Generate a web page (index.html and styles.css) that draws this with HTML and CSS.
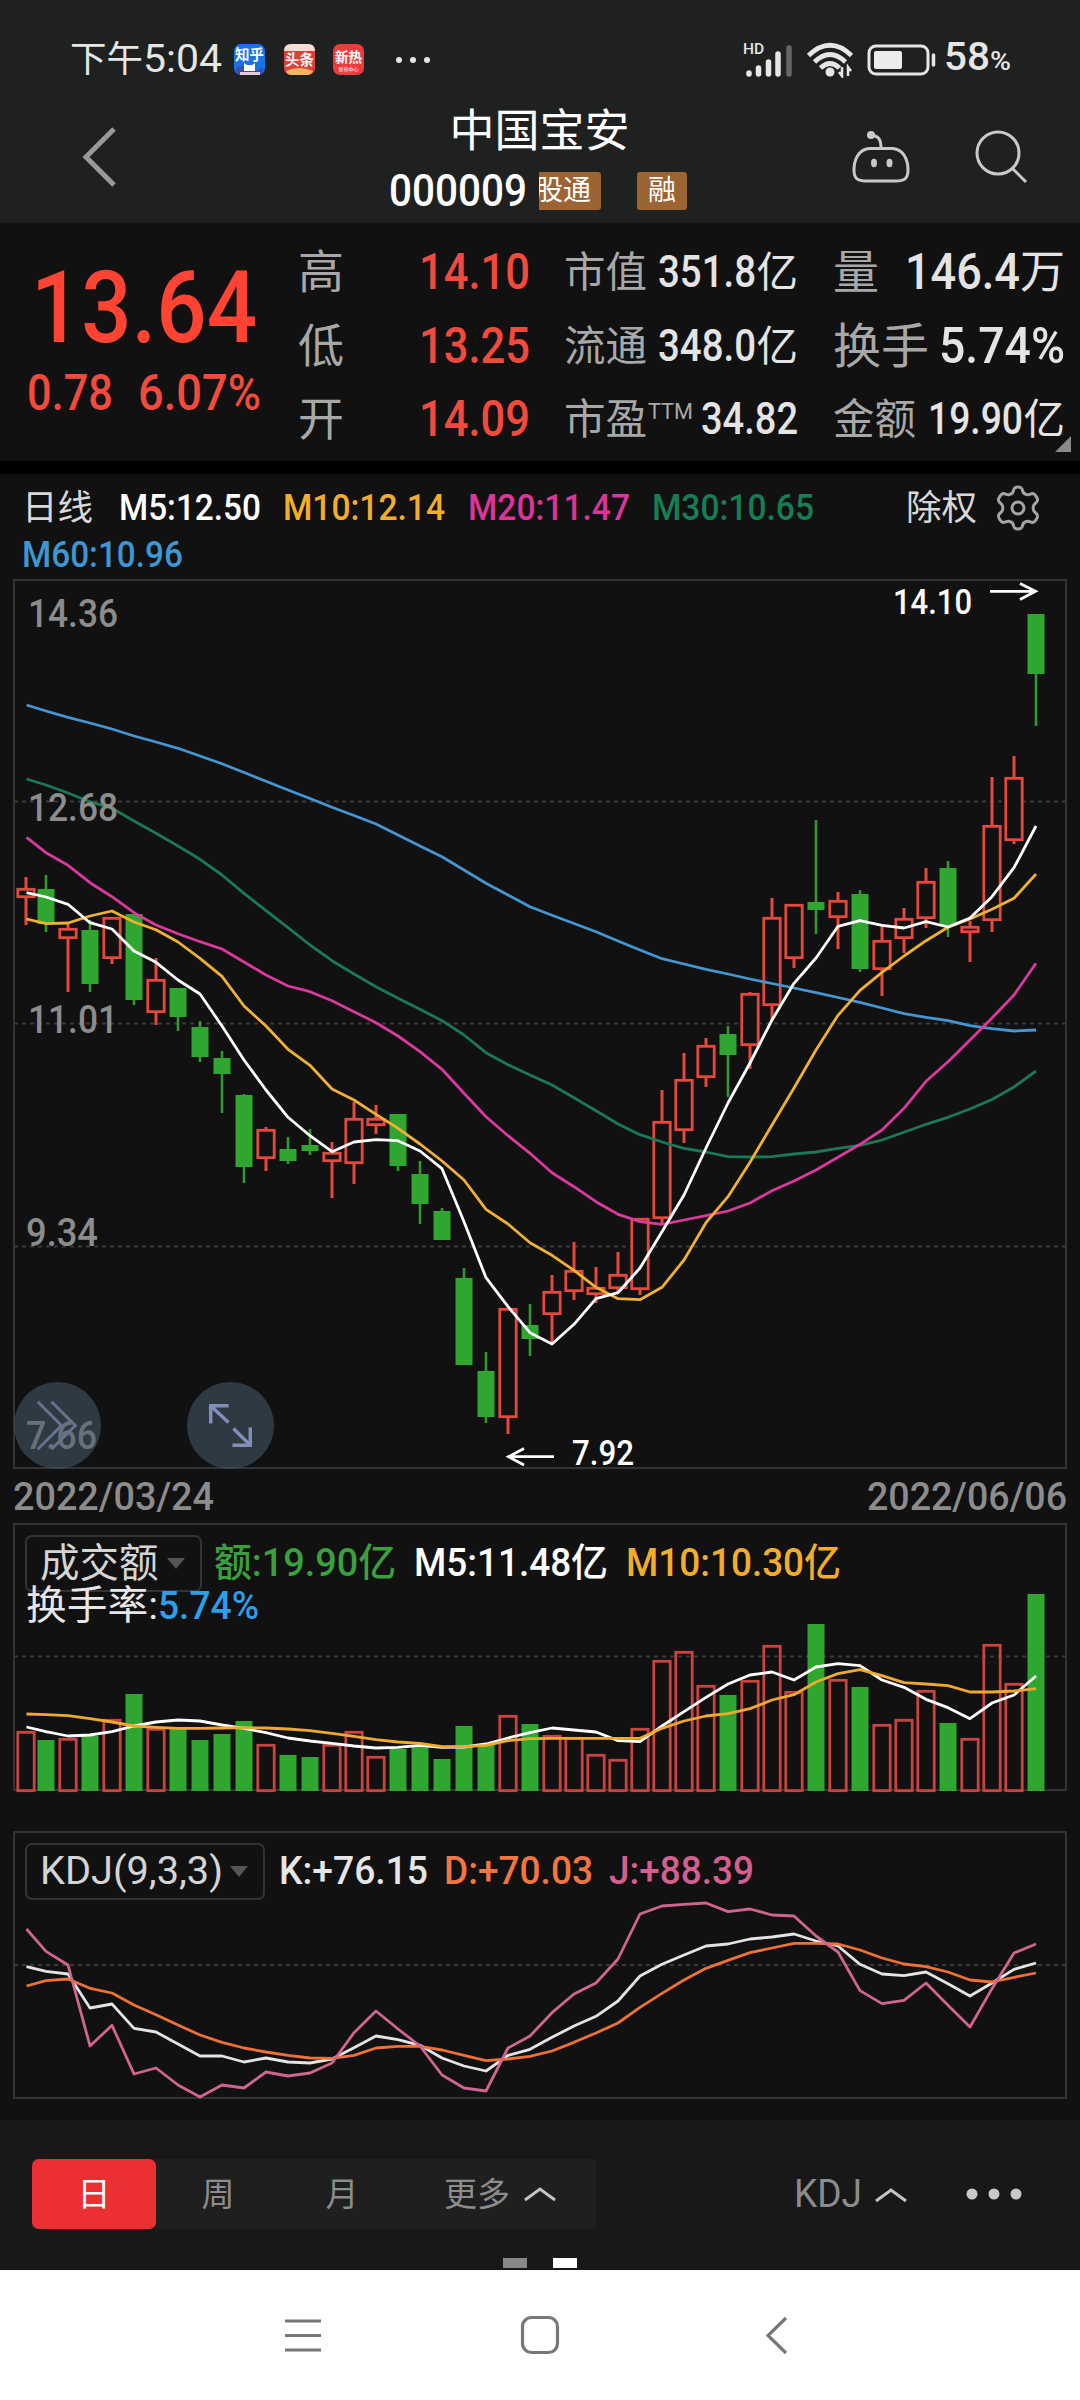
FILE: index.html
```html
<!DOCTYPE html>
<html lang="zh-CN">
<head>
<meta charset="utf-8">
<title>中国宝安 000009</title>
<link rel="stylesheet" href="styles.css">
</head>
<body>
<header class="top">
  <div class="status">
    <div class="clock"><span class="cjk">下午</span><span class="fit" data-w="79">5:04</span></div>
    <div class="apps">
      <svg class="app" viewBox="0 0 31 31"><rect width="31" height="31" rx="7" fill="#1772e6"/><path d="M2 24q6-4 13 0t14 0v3q-2 4-7 4H8q-5 0-6-4z" fill="#3c4fa8"/><path d="M10 27v-8l3 2h5l3-2v8z" fill="#fff"/><path d="M6 28h20v3H6z" fill="#e8c9dc"/><text x="15.500" y="16" class="app-text">知乎</text></svg>
      <svg class="app" viewBox="0 0 31 31"><rect width="31" height="31" rx="7" fill="#e33d36"/><path d="M0 7q0-7 7-7h17q7 0 7 7z" fill="#f6dcd4"/><path d="M2 27q13-6 27 0-2 4-6 4H8q-5 0-6-4z" fill="#f3b562"/><text x="15.500" y="21" class="app-text">头条</text></svg>
      <svg class="app" viewBox="0 0 31 31"><rect width="31" height="31" rx="7" fill="#ee3b3e"/><text x="15.500" y="18" class="app-text small">新热</text><text x="15.500" y="27" class="app-text tiny">新热中心</text></svg>
    </div>
    <svg class="more-dots" viewBox="0 0 36 10"><circle cx="4" cy="5" r="3"/><circle cx="18" cy="5" r="3"/><circle cx="32" cy="5" r="3"/></svg>
    <div class="sys">
      <svg class="signal" viewBox="0 0 50 36"><text x="-2" y="12" class="hd">HD</text><g stroke-width="5.500" stroke-linecap="round"><path d="M4 31v1M13.500 26v6M23.500 20v12M33 12v20"/><path class="dim" d="M44 6v26"/></g></svg>
      <svg class="wifi" viewBox="0 0 48 36"><g fill="none" stroke="#e6e6e6" stroke-width="4.800"><path d="M2.500 13.500Q24-7 45.500 13.500"/><path d="M8.500 20Q24 5 39.500 20"/><path d="M14.500 26Q24 17 33.500 26"/></g><circle cx="24" cy="30" r="4.500" fill="#e6e6e6"/><path d="M36 25v9l-3-4M42 34v-9l3 4" fill="none" stroke="#e6e6e6" stroke-width="2.500"/></svg>
      <svg class="battery" viewBox="0 0 70 32"><rect x="2" y="2" width="59" height="28" rx="7" fill="none" stroke="#e6e6e6" stroke-width="3"/><rect x="7" y="7" width="28" height="18" rx="2" fill="#ececec"/><path d="M66.500 11v10" stroke="#e6e6e6" stroke-width="3.500" stroke-linecap="round"/></svg>
      <div class="pct"><span class="fit" data-w="46">58</span><span class="fit sign" data-w="21">%</span></div>
    </div>
  </div>
  <div class="title-bar">
    <svg class="back" viewBox="0 0 40 64"><path d="M34 4 6 32l28 28" fill="none" stroke="#999" stroke-width="5"/></svg>
    <div class="title">
      <h1>中国宝安</h1>
      <div class="code-row"><span class="fit code" data-w="138">000009</span><span class="tag cut"><span>股通</span></span><span class="tag">融</span></div>
    </div>
    <div class="tools">
      <svg class="robot" viewBox="0 0 58 54"><g fill="none" stroke="#c9c9c9" stroke-width="3"><path d="M29 18C29 10 27 6 19 5"/><path d="M17 18.500h24C51 19.500 56 29 56 40c0 9-4 11-12 11H14C6 51 2 49 2 40c0-11 5-20.500 15-21.500z"/></g><circle cx="19" cy="5" r="4" fill="#c9c9c9"/><ellipse cx="22" cy="33" rx="3" ry="4.200" fill="#c9c9c9"/><ellipse cx="37.500" cy="33" rx="3" ry="4.200" fill="#c9c9c9"/></svg>
      <svg class="search" viewBox="0 0 56 56"><circle cx="24" cy="24" r="21" fill="none" stroke="#c9c9c9" stroke-width="3"/><path d="m38 39 14 14" stroke="#c9c9c9" stroke-width="3"/></svg>
    </div>
  </div>
</header>

<section class="quote">
  <div class="price">
    <div class="last"><span class="fit" data-w="226">13.64</span></div>
    <div class="change"><span class="fit" data-w="86">0.78</span><span class="fit" data-w="123">6.07%</span></div>
  </div>
  <div class="col ohl">
    <div class="row"><span class="lab">高</span><span class="fit red" data-w="111">14.10</span></div>
    <div class="row"><span class="lab">低</span><span class="fit red" data-w="111">13.25</span></div>
    <div class="row"><span class="lab">开</span><span class="fit red" data-w="111">14.09</span></div>
  </div>
  <div class="col cap">
    <div class="row"><span class="lab">市值</span><span class="val"><span class="fit" data-w="98">351.8</span><span class="unit">亿</span></span></div>
    <div class="row"><span class="lab">流通</span><span class="val"><span class="fit" data-w="98">348.0</span><span class="unit">亿</span></span></div>
    <div class="row"><span class="lab">市盈<span class="ttm fit" data-w="45">TTM</span></span><span class="fit val" data-w="97">34.82</span></div>
  </div>
  <div class="col vol">
    <div class="row"><span class="lab l1">量</span><span class="val big"><span class="fit" data-w="115">146.4</span><span class="unit">万</span></span></div>
    <div class="row"><span class="lab l2">换手</span><span class="fit val big" data-w="126">5.74%</span></div>
    <div class="row"><span class="lab">金额</span><span class="val"><span class="fit" data-w="95">19.90</span><span class="unit">亿</span></span></div>
  </div>
  <i class="corner"></i>
</section>

<section class="legend">
  <div class="ma-list">
    <span class="cjk">日线</span><span class="fit m5" data-w="142">M5:12.50</span><span class="fit m10" data-w="162">M10:12.14</span><span class="fit m20" data-w="162">M20:11.47</span><span class="fit m30" data-w="162">M30:10.65</span><span class="fit m60" data-w="161">M60:10.96</span>
  </div>
  <div class="adjust"><span class="cjk">除权</span>
    <svg class="gear" viewBox="0 0 44 46"><path d="M22 2c3.500 0 4 1 4.500 3.500.5 2.500 2 3.800 4.500 4.200 2 .3 3.500-.9 5.500-1.200 2.200-.2 5.500 5 5 7-.4 1.800-3 3-3.800 4.800-.7 1.800-.7 3.600 0 5.400.8 1.800 3.400 3 3.800 4.800.5 2-2.800 7.200-5 7-2-.3-3.500-1.500-5.500-1.200-2.500.4-4 1.700-4.500 4.200C26 43 25.500 44 22 44s-4-1-4.500-3.500c-.5-2.500-2-3.800-4.500-4.200-2-.3-3.500.9-5.500 1.200-2.200.2-5.500-5-5-7 .4-1.800 3-3 3.800-4.800.7-1.800.7-3.600 0-5.400-.8-1.800-3.400-3-3.800-4.800-.5-2 2.800-7.200 5-7 2 .3 3.500 1.500 5.500 1.200 2.500-.4 4-1.700 4.500-4.200C18 3 18.500 2 22 2z"/><circle cx="22" cy="23" r="6"/></svg>
  </div>
</section>

<section class="panel kline">
  <svg id="kline" class="plot" viewBox="0 574 1080 948"></svg>
  <div class="float f1"><svg viewBox="0 0 88 88"><path d="M24 20 48 44 24 68M38 20 62 44 38 68" fill="none" stroke="#65748a" stroke-width="3"/></svg></div>
  <div class="float f2"><svg viewBox="0 0 88 88"><g fill="none" stroke="#7f8fb8" stroke-width="3.500"><path d="M24 42V24h18M25 25l17 16M64 46v18H46M63 63 47 47"/></g></svg></div>
</section>

<section class="panel turnover">
  <svg id="turnover" class="plot" viewBox="0 1522 1080 300"></svg>
  <div class="head">
    <span class="select"><span class="cjk">成交额</span><i class="caret"></i></span>
    <span class="fit amount" data-w="182">额:19.90亿</span><span class="fit m5" data-w="194">M5:11.48亿</span><span class="fit m10" data-w="215">M10:10.30亿</span>
  </div>
  <div class="rate"><span class="fit" data-w="132">换手率:</span><span class="fit blue" data-w="101">5.74%</span></div>
</section>

<section class="panel kdj">
  <svg id="kdj" class="plot" viewBox="0 1822 1080 298"></svg>
  <div class="head">
    <span class="select"><span class="fit" data-w="183">KDJ(9,3,3)</span><i class="caret"></i></span>
    <span class="fit k" data-w="149">K:+76.15</span><span class="fit d" data-w="149">D:+70.03</span><span class="fit j" data-w="145">J:+88.39</span>
  </div>
</section>

<footer class="toolbar">
  <div class="periods">
    <span class="tab on">日</span><span class="tab">周</span><span class="tab">月</span>
    <span class="tab more">更多<svg class="chev" viewBox="0 0 34 16"><path d="M2 14 17 3l15 11"/></svg></span>
  </div>
  <div class="indicator"><span class="fit" data-w="68">KDJ</span><svg class="chev" viewBox="0 0 34 16"><path d="M2 14 17 3l15 11"/></svg></div>
  <svg class="dots" viewBox="0 0 58 14"><circle cx="7" cy="7" r="5.500"/><circle cx="29" cy="7" r="5.500"/><circle cx="51" cy="7" r="5.500"/></svg>
  <div class="pager"><i></i><i class="on"></i></div>
</footer>

<nav class="sysnav">
  <svg viewBox="0 0 40 40"><path d="M2 6h36M2 20.500h36M2 35h36"/></svg>
  <svg viewBox="0 0 40 40"><rect x="2.500" y="2.500" width="35" height="35" rx="9"/></svg>
  <svg viewBox="0 0 40 40"><path d="M29 3 11 20.500 29 38"/></svg>
</nav>
<script src="chart.js"></script>
</body>
</html>
```
FILE: styles.css
```css
* { box-sizing: border-box; }
body {
  margin: 0;
  width: 1080px;
  height: 2400px;
  overflow: hidden;
  background: #111;
  color: #e6e6e6;
  font-family: Roboto, "Noto Sans CJK SC", sans-serif;
}
svg { display: block; flex: none; }
.fit { display: inline-block; white-space: nowrap; transform-origin: 0 50%; flex: none; }
.cjk { white-space: nowrap; flex: none; }

/* status bar and title */
.top { height: 223px; background: #1f2121; }
.status { height: 90px; padding: 29px 69px 0 70px; display: flex; align-items: center; font-size: 39px; line-height: 61px; }
.clock { display: flex; width: 164px; }
.clock .cjk { font-size: 36.5px; }
.apps { display: flex; gap: 18.5px; }
.app { width: 31px; height: 31px; }
.app-text { font-size: 14.5px; font-weight: 700; fill: #fff; text-anchor: middle; }
.app-text.small { font-size: 13.5px; }
.app-text.tiny { font-size: 5px; font-weight: 400; }
.more-dots { width: 36px; height: 10px; margin-left: 31px; fill: #e6e6e6; }
.sys { margin-left: auto; display: flex; align-items: center; }
.signal { width: 50px; height: 36px; stroke: #e6e6e6; margin-right: 11px; overflow: visible; }
.signal .dim { stroke: #666; }
.hd { font-size: 15.5px; font-weight: 500; fill: #e6e6e6; stroke: none; }
.wifi { width: 48px; height: 36px; margin-right: 13px; }
.battery { width: 70px; height: 32px; margin-right: 7px; }
.pct { display: flex; align-items: baseline; font-weight: 500; }
.pct .sign { font-size: 25px; }

.title-bar { height: 132px; display: grid; grid-template-columns: 389px 301px 390px; align-items: center; }
.back { width: 40px; height: 64px; margin: 2px 0 0 80px; }
.title { align-self: start; padding-top: 12px; color: #fff; }
.title h1 { margin: 0; font-size: 45px; font-weight: 400; line-height: 60px; text-align: center; }
.code-row { display: flex; align-items: center; height: 58px; }
.code { font-size: 45px; line-height: 58px; font-weight: 500; }
.tag { height: 38px; width: 50px; border-radius: 3px; background: #9c6333; font-size: 28px; line-height: 37px; text-align: center; margin-left: 36px; white-space: nowrap; }
.tag.cut { width: 62px; margin-left: 12px; border-radius: 0 3px 3px 0; overflow: hidden; display: flex; justify-content: flex-end; padding-right: 10px; }
.tag.cut span { flex: none; }
.tools { display: flex; align-items: center; padding: 2px 0 0 162px; gap: 64px; }
.robot { width: 58px; height: 54px; }
.search { width: 56px; height: 56px; }

/* quote summary */
.quote { position: relative; height: 251px; display: flex; border-bottom: 13px solid #000; padding-top: 13px; }
.price { width: 298px; color: #ff4433; }
.last { margin-top: 20px; padding-left: 31px; font-size: 101px; font-weight: 500; line-height: 104px; }
.change { display: flex; gap: 25px; padding-left: 27px; font-size: 50px; line-height: 66px; color: #f34a3e; font-weight: 500; }
.col { display: flex; flex-direction: column; line-height: 73.5px; }
.row { display: flex; justify-content: space-between; height: 73.5px; }
.lab { color: #a8a8a8; white-space: nowrap; font-size: 41.5px; }
.ohl { width: 232px; margin-right: 34px; font-size: 50px; }
.ohl .lab { font-size: 46px; }
.red { color: #f34a3e; font-weight: 500; }
.cap { width: 234px; margin-right: 35px; font-size: 43.5px; }
.cap .lab { display: flex; }
.val { display: flex; color: #e4e4e4; font-weight: 500; }
.unit { font-size: 41.5px; font-weight: 400; }
.ttm { font-size: 22px; line-height: 58px; height: 58px; font-weight: 400; margin-left: 1px; }
.vol { width: 232px; font-size: 43.5px; }
.big { font-size: 50px; }
.big .unit { font-size: 45px; }
.vol .l1 { font-size: 46px; }
.vol .l2 { font-size: 48px; }
.corner { position: absolute; right: 9px; bottom: 9px; border-left: 16px solid transparent; border-bottom: 16px solid #8a8a8a; }

/* moving average legend */
.legend { height: 100px; display: flex; justify-content: space-between; padding: 11px 40px 0 22px; font-size: 37px; line-height: 46.5px; font-weight: 500; }
.ma-list { display: flex; flex-wrap: wrap; column-gap: 22.5px; width: 830px; }
.ma-list .m5 { margin-left: 3px; }
.legend .cjk { font-size: 35.5px; color: #d8d8d8; font-weight: 400; }
.m5 { color: #fff; }
.m10 { color: #f2ad2c; }
.m20 { color: #dd3499; }
.m30 { color: #187d55; }
.m60 { color: #3c97d3; }
.adjust { display: flex; height: 46px; gap: 19px; align-items: center; }
.gear { width: 44px; height: 46px; fill: none; stroke: #a5a5a5; stroke-width: 3; }

/* charts */
.panel { position: relative; }
.plot { position: absolute; inset: 0; width: 100%; height: 100%; }
.kline { height: 948px; }
.turnover { height: 300px; padding: 13px 0 0 25px; }
.kdj { height: 298px; padding: 21px 0 0 25px; }
.head { position: relative; display: flex; align-items: center; font-size: 39px; line-height: 57px; font-weight: 500; }
.select { height: 57px; border: 2px solid #333; border-radius: 7px; display: flex; align-items: center; justify-content: space-between; padding: 0 15px 0 13px; color: #d5d5d5; flex: none; font-weight: 400; }
.turnover .select { width: 177px; margin-right: 12px; }
.turnover .cjk { font-size: 39.5px; }
.turnover .m5, .turnover .m10 { margin-left: 18px; }
.kdj .select { width: 240px; margin-right: 14px; }
.caret { border: 9px solid transparent; border-top: 11px solid #555; border-bottom: 0; }
.amount { color: #3c9f3f; }
.k { color: #e6e6e6; }
.d { color: #f47540; margin-left: 16px; }
.j { color: #d5608f; margin-left: 16px; }
.rate { position: relative; display: flex; line-height: 40px; margin-top: -6px; padding-left: 1px; font-size: 39.5px; }
.blue { color: #2c9eea; font-weight: 500; }

.float { position: absolute; top: 808px; width: 87px; height: 87px; border-radius: 50%; background: rgba(73, 91, 108, 0.55); }
.float svg { width: 87px; height: 87px; }
.f1 { left: 14px; }
.f2 { left: 187px; }

.frame { fill: none; stroke: #333; stroke-width: 2; }
.grid { stroke: #3a3a3a; stroke-width: 2; stroke-dasharray: 4 4; }
.up { fill: #111; stroke: #e5493c; stroke-width: 2.8; }
.turnover .up { fill: none; stroke: #c9443f; }
.down { fill: #2fa62f; stroke: none; }
.wick-up { stroke: #e5493c; stroke-width: 3; }
.wick-down { stroke: #2f9a31; stroke-width: 2.6; }
.line { fill: none; stroke-width: 2.8; stroke-linejoin: round; }
.axis { fill: #8c8c8c; font-size: 39px; font-weight: 500; }
.mark { fill: #fff; font-size: 35px; font-weight: 500; }
.arrow { fill: none; stroke: #fff; stroke-width: 2.8; }

/* bottom controls */
.toolbar { position: relative; height: 150px; background: #181818; display: flex; align-items: flex-start; padding: 39px 57px 0 32px; color: #8c8c8c; font-size: 33px; line-height: 71px; }
.periods { display: flex; width: 564px; height: 70px; background: #1f1f1f; border-radius: 4px; }
.tab { width: 124px; height: 70px; text-align: center; }
.tab.on { background: #eb3033; color: #fff; border-radius: 7px; }
.tab.more { width: 192px; display: flex; align-items: center; justify-content: flex-end; gap: 13px; padding-right: 39px; }
.chev { width: 34px; height: 16px; fill: none; stroke: #c4c4c4; stroke-width: 3; }
.indicator { display: flex; align-items: center; margin-left: auto; gap: 12px; font-size: 38px; }
.dots { width: 58px; height: 14px; margin: 28px 0 0 57px; fill: #c8c8c8; }
.pager { position: absolute; left: 503px; bottom: 2px; display: flex; gap: 26px; }
.pager i { width: 24px; height: 10px; background: #888; }
.pager .on { background: #fff; }
.sysnav { height: 130px; background: #fff; display: flex; justify-content: center; gap: 197px; padding-top: 45px; }
.sysnav svg { width: 40px; height: 40px; fill: none; stroke: #777; stroke-width: 3.2; }
```
FILE: chart.js
```js
// Condense each label to the width reserved for it.
document.querySelectorAll('.fit').forEach(function (el) {
  var w = +el.dataset.w, n = el.getBoundingClientRect().width;
  el.style.transform = 'scaleX(' + w / n + ')';
  el.style.marginRight = (w - n) + 'px';
});

// Each day: direction, high, body top, body bottom, low, turnover bar top.
var days = [
['u',877,888,898,925,1731],['d',875,889,924,932,1740],['u',924,928,939,992,1738],['d',920,930,984,992,1736],
['u',917,917,959,964,1719],['d',914,914,1000,1005,1694],['u',958,979,1013,1025,1728],['d',988,988,1017,1031,1728],
['d',1021,1027,1057,1062,1740],['d',1051,1058,1074,1113,1734],['d',1094,1095,1167,1183,1721],['u',1127,1129,1159,1171,1744],
['d',1137,1149,1161,1164,1755],['d',1129,1145,1151,1155,1757],['u',1142,1152,1162,1198,1744],['u',1102,1118,1164,1184,1731],
['u',1105,1118,1126,1134,1756],['d',1114,1114,1166,1171,1749],['d',1161,1174,1204,1224,1747],['d',1208,1211,1240,1240,1759],
['d',1268,1278,1365,1365,1726],['d',1352,1371,1417,1423,1745],['u',1308,1308,1418,1434,1715],['d',1304,1325,1339,1356,1724],
['u',1275,1291,1315,1342,1735],['u',1242,1270,1292,1300,1737],['u',1267,1287,1295,1303,1754],['u',1252,1274,1289,1292,1759],
['u',1218,1218,1290,1295,1728],['u',1090,1121,1219,1223,1660],['u',1053,1079,1131,1143,1651],['u',1038,1045,1078,1087,1685],
['d',1026,1034,1055,1097,1695],['u',992,993,1046,1069,1680],['u',898,917,1006,1020,1645],['u',904,904,959,968,1691],
['d',820,902,910,934,1624],['u',892,900,918,949,1679],['d',890,894,969,972,1687],['u',927,940,970,996,1724],
['u',908,918,939,953,1719],['u',868,881,919,928,1690],['d',861,868,926,937,1723],['u',921,926,933,962,1738],
['u',777,825,921,932,1644],['u',756,777,841,844,1683],['d',614,614,674,726,1594]];

function X(i) { return i === 0 ? 26.5 : 24 + 22 * i; }
function line(vals, color) {
  var pts = vals.map(function (v, i) { return X(i) + ',' + v; }).join(' ');
  return '<polyline class="line" stroke="' + color + '" points="' + pts + '"/>';
}
function scaled(base, vals) { return vals.map(function (v) { return base + v / 3; }); }
function grid(y) { return '<path class="grid" d="M14 ' + y + 'H1066"/>'; }
function label(x, y, w, t, cls) {
  return '<text class="' + (cls || 'axis') + '" x="' + x + '" y="' + y + '" textLength="' + w + '" lengthAdjust="spacingAndGlyphs">' + t + '</text>';
}
function bar(d, x, top, bottom) {
  return d === 'u'
    ? '<rect class="up" x="' + (x - 8.2) + '" y="' + (top + 1.3) + '" width="16.400" height="' + Math.max(1, bottom - top - 2.6) + '"/>'
    : '<rect class="down" x="' + (x - 8.5) + '" y="' + top + '" width="17" height="' + (bottom - top) + '"/>';
}

var k = '<rect class="frame" x="14" y="580" width="1052" height="888"/>' + grid(801.5) + grid(1023.5) + grid(1246.5);
days.forEach(function (d, i) {
  var x = 24 + 22 * i + (i === 0 ? 2 : 0);
  k += '<path class="wick-' + (d[0] === 'u' ? 'up' : 'down') + '" d="M' + x + ' ' + d[1] + 'V' + d[2] + 'M' + x + ' ' + d[3] + 'V' + d[4] + '"/>' + bar(d[0], x, d[2], d[3]);
});
k += line([705,711,717.3,723,729,736,742,748.3,756,763.7,772.5,781.3,790,798.5,807.3,815.5,824,835,846,856.7,870,883.3,895,906.7,915.3,923.5,931.7,941,950,958.7,964,969.3,974,979,983.5,988,992.7,997.5,1002.3,1008,1013.7,1017.3,1020.7,1025.7,1028.7,1031,1030], '#4596d0');
k += line([779,785,793,801.7,808.3,821,833.3,846,859.3,875,893.3,910.7,927.7,945,960.7,974,986.7,998.3,1009.3,1020.7,1035,1052.7,1064.7,1075,1085,1097.7,1110.7,1124,1134.7,1142,1148.3,1152,1156.7,1157,1156.7,1154,1152,1148.3,1145.3,1140,1132.3,1124.3,1117.3,1109,1099.5,1087,1071], '#1c7857');
k += line([837.3,852.7,865.3,882.7,896.7,912.7,925,933.7,941.7,949,962,975,986,991.7,1000.7,1011.7,1022.7,1036,1051.7,1069.3,1093.3,1116.7,1135.7,1153.3,1172.7,1186.7,1201.7,1214.3,1221.7,1224.3,1220,1215.7,1211,1203,1190.7,1181,1170,1157.3,1144.3,1130,1108.3,1081.3,1061.7,1040,1018,995,963.3], '#d93a9c');
k += line([919,923.7,923,916,911,922,929.7,942,958.3,976.3,1006,1026,1049.3,1065.3,1089,1100,1114.3,1128.3,1144,1161,1180,1209.3,1224,1242.7,1255.3,1270.3,1287.3,1298.7,1299.7,1287.3,1260,1222.7,1196.7,1162.3,1125,1088,1050,1015.3,990.3,972.3,956,940.7,927.3,919,909.3,898.3,874], '#efb034');
k += line([892.7,897,904.3,922.7,929,951,962.3,980,994,1026,1060,1090,1117.3,1135.7,1151.7,1142,1139.7,1140.7,1151,1168.7,1221.7,1277.7,1306.7,1332.7,1344,1324.3,1298.7,1292.7,1268,1231.7,1195,1148,1103,1063,1020,983.3,958,926.3,920.7,925.3,928,921.7,927,918,896.7,867.7,826], '#fff');
k += label(28, 627, 90, '14.36') + label(28, 821, 90, '12.68') + label(28, 1033, 90, '11.01') + label(26, 1246, 72, '9.34') + label(26, 1449, 71, '7.66');
k += label(13, 1510, 201, '2022/03/24') + label(867, 1510, 200, '2022/06/06');
k += label(893, 614, 79, '14.10', 'mark') + label(572, 1465, 62, '7.92', 'mark');
k += '<path class="arrow" d="M990 591.300H1035M1020 583.500 1035.500 591.300 1020 599.500M554 1456.700H509M524 1448.500 508.500 1456.700 524 1465"/>';
document.getElementById('kline').innerHTML = k;

var t = '<rect class="frame" x="14" y="1524" width="1052" height="266"/>' + grid(1656.5);
days.forEach(function (d, i) { t += bar(d[0], 24 + 22 * i + (i === 0 ? 2 : 0), d[5], d[0] === 'u' ? 1792 : 1791); });
t += line(scaled(1510, [651,665,678,675,665,648,636,630,633,645,655,668,684,693,700,708,714,712,706,712,711,702,684,668,654,660,666,692,695,648,605,562,522,495,486,510,471,461,467,510,532,568,593,626,579,555,498]), '#fff');
t += line(scaled(1510, [612,614,617,626,636,648,652,655,655,654,653,654,657,662,670,679,689,696,700,710,710,706,692,686,685,685,685,685,685,655,633,618,611,596,570,554,516,491,479,497,518,522,527,546,546,543,536]), '#efa92e');
document.getElementById('turnover').innerHTML = t;

var j = '<rect class="frame" x="14" y="1832" width="1052" height="266"/>' + grid(1965);
j += line(scaled(1810, [470,484,492,594,582,655,666,702,738,738,756,744,756,759,747,713,678,689,706,744,768,783,736,718,682,648,619,573,498,463,435,408,402,387,381,372,393,408,463,492,497,486,521,558,519,478,459]), '#e4e4e4');
j += line(scaled(1810, [528,512,507,535,549,585,614,645,675,697,714,726,736,744,745,736,714,709,709,720,736,752,747,739,723,697,669,639,592,550,510,475,451,428,414,400,400,402,420,444,462,470,486,510,516,502,489]), '#ee7138');
j += line(scaled(1810, [357,424,465,708,646,792,774,825,861,825,834,786,798,789,759,668,603,657,708,795,834,843,714,678,608,552,519,447,312,288,283,279,305,297,315,318,378,426,542,581,571,519,586,651,536,429,402]), '#cf6590');
document.getElementById('kdj').innerHTML = j;
```
